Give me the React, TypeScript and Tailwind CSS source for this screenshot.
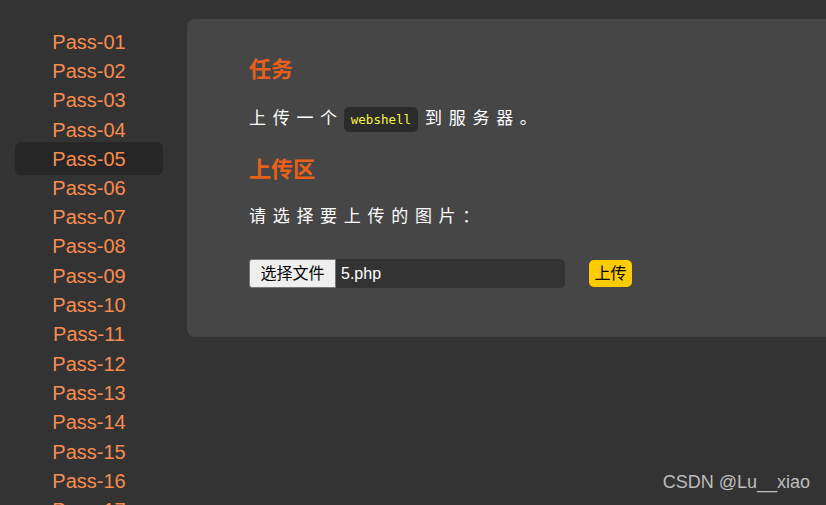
import React from "react";

const passes = Array.from({ length: 17 }, (_, i) => `Pass-${String(i + 1).padStart(2, "0")}`);

export default function App() {
  const active = "Pass-05";
  return (
    <div
      className="relative flex h-screen overflow-hidden bg-[#333333]"
      style={{ fontFamily: '"Liberation Sans", Arial, "Noto Sans CJK SC", sans-serif' }}
    >
      {/* Sidebar */}
      <div className="w-[187px] shrink-0 pl-[15px] pr-[24px] pt-[27px]">
        {passes.map((p) =>
          p === active ? (
            <div
              key={p}
              className="relative z-0 -my-[2px] flex h-[33px] items-center justify-center rounded-md bg-[#262626] text-[20px] text-[#f98b4e]"
            >
              {p}
            </div>
          ) : (
            <div key={p} className="flex h-[29.3px] items-center justify-center text-[20px] text-[#f98b4e]">
              {p}
            </div>
          )
        )}
      </div>

      {/* Main panel */}
      <div className="mt-[19px] flex-1 self-start rounded-l-lg bg-[#464646] pb-[49px] pl-[62px] pt-[36px]">
        <h2 className="text-[22px] font-bold leading-[30px] text-[#e8601a]">任务</h2>
        <p className="mt-[21px] flex items-center text-[17px] leading-[26px] tracking-[6.7px] text-white">
          <span>上传一个</span>
          <code
            className="mr-[7px] rounded-[5px] bg-[#2b2b2b] px-[7px] font-normal leading-[25px] tracking-normal text-[#f5f542]"
            style={{ fontFamily: '"DejaVu Sans Mono", "Liberation Mono", monospace', fontSize: "12.5px" }}
          >
            webshell
          </code>
          <span>到服务器。</span>
        </p>
        <h2 className="mt-[23px] text-[22px] font-bold leading-[30px] text-[#e8601a]">上传区</h2>
        <p className="mt-[19px] text-[17px] leading-[26px] tracking-[6.7px] text-white">请选择要上传的图片：</p>
        <div className="mt-[29px] flex items-center">
          <div className="flex h-[29px] w-[316px] items-center rounded-[5px] bg-[#333333]">
            <span className="flex h-full w-[87px] items-center justify-center rounded-l-[3px] border border-[#767676] bg-[#efefef] text-[16px] text-black">
              选择文件
            </span>
            <span className="ml-[5px] text-[16px] text-white">5.php</span>
          </div>
          <button className="ml-[24px] flex h-[27px] w-[43px] items-center justify-center rounded-[5px] bg-[#ffcc00] text-[16px] text-black">
            上传
          </button>
        </div>
      </div>

      <div className="absolute bottom-[9px] right-[16px] text-[18px] text-[#bdbdbd]">CSDN @Lu__xiao</div>
    </div>
  );
}
